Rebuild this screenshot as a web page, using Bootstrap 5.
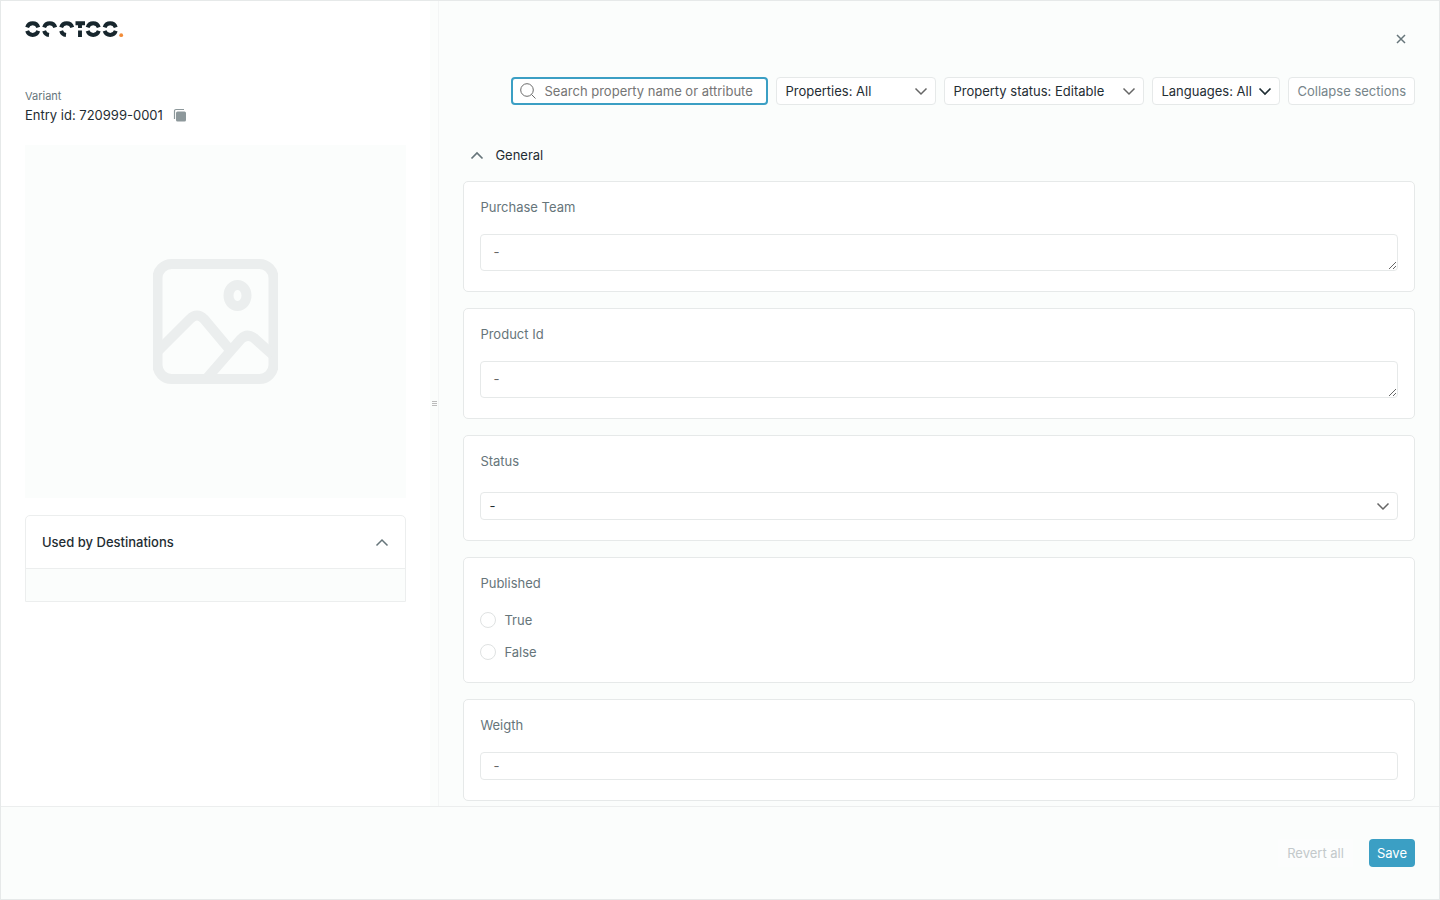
<!DOCTYPE html>
<html lang="en">
<head>
<meta charset="utf-8">
<meta name="viewport" content="width=device-width, initial-scale=1">
<title>Entry 720999-0001</title>
<link href="https://cdn.jsdelivr.net/npm/bootstrap@5.3.0/dist/css/bootstrap.min.css" rel="stylesheet">
<style>
:root{--ink:#1f2d33;--muted-ink:#66757a;--line:#e6e9e9;--surface:#fbfdfc;--accent:#3b9fc4}
body{font-family:Inter,"Liberation Sans",sans-serif;font-size:13px;line-height:18px;color:var(--ink);background:var(--surface)}
.shell{border:1px solid var(--line)}
.side{width:calc(30% - 2px);min-width:280px;background:#fff;padding:20px 24px 24px}
.brand{line-height:0}
.kind{font-size:11px;line-height:16px;color:var(--muted-ink);margin-top:50px}
.entry{height:22px;gap:10px}
.copy svg{display:block}
.placeholder-box{background:var(--surface);margin-top:19px;height:353px}
.dest{margin-top:17px;border:1px solid #eceeee;border-radius:5px 5px 0 0}
.dest-head{padding:16px;height:52px;font-weight:500}
.dest-head svg{display:block}
.dest-body{height:33px;background:var(--surface);border-top:1px solid #eceeee}
.grip{width:9px;border-right:1px solid #f3f5f5}
.pane{padding:27px 24px 6px}
.close-btn{width:28px;height:22px}
.tools{margin-top:27px}
.ctl{height:28px;border:1px solid var(--line);border-radius:4px;background-color:#fff;font-size:13px;line-height:18px;color:var(--ink);padding:4px 8px}
.form-select.ctl{background-size:14px 9px;background-position:right 7px center;padding-right:24px;
 background-image:url("data:image/svg+xml,%3Csvg xmlns='http://www.w3.org/2000/svg' viewBox='0 0 14 9' fill='none' stroke='%23666' stroke-width='1.5'%3E%3Cpath d='M1.5 1.5 7 7l5.500-5.500'/%3E%3C/svg%3E")}
.form-select.dark-arrow{background-image:url("data:image/svg+xml,%3Csvg xmlns='http://www.w3.org/2000/svg' viewBox='0 0 14 9' fill='none' stroke='%231f2d33' stroke-width='1.700'%3E%3Cpath d='M1.500 1.500 7 7l5.500-5.500'/%3E%3C/svg%3E")}
.w-props{width:160px}.w-status{width:200px}.w-lang{width:128px}
.finder{width:257px;border:2px solid var(--accent);border-radius:4px;background:#fff;height:28px;padding-left:7px}
.finder input{font-size:13px;line-height:18px;padding:0 8px;color:var(--ink)}
.finder input:focus{outline:0}
.finder input::placeholder{color:#757575}
.ctl.quiet{color:#77858a;font-size:13px}
.section-head{margin:41px 0 17px 7px;gap:11px;height:18px}
.prop{border:1px solid var(--line);border-radius:5px;background:#fff;padding:16px 16px 20px}
.prop-name{display:block;font-size:13px;line-height:18px;color:var(--muted-ink);margin:0 0 18px;font-weight:400}
.ctl.field{padding-left:12px;color:var(--muted-ink)}
.ctl.field::placeholder{color:#666}
textarea.ctl.field{height:37px;min-height:37px;padding-top:8px}
.wide-gap{margin-bottom:22px}
.picks{clear:both;gap:12px}
.pick{height:20px;gap:8px;color:var(--muted-ink)}
.pick input{width:16px;height:16px;margin:0;border-color:#dfe2e2}
.foot{border-top:1px solid #eceeee;height:93px;padding:0 24px;gap:16px}
.save{height:28px;border-radius:4px;background:var(--accent);color:#fff;font-size:13px;line-height:18px;padding:5px 8px;border:0}
.revert{height:28px;border:0;background:#fcfdfd;color:#c3c9cb;font-size:13px;line-height:18px;padding:5px 9px}
</style>
</head>
<body>
<div class="shell vh-100 d-flex flex-column">
 <div class="d-flex flex-grow-1 overflow-hidden">
  <aside class="side flex-shrink-0 overflow-auto">
   <div class="brand">
    <svg width="99" height="17" viewBox="0 0 99 17" role="img" aria-label="Logo">
     <defs>
      <path id="up" d="M2.100 6.300A5.900 5.900 0 0 1 13.300 6.300"/>
      <path id="dn" d="M2.100 9.900A5.900 5.900 0 0 0 13.300 9.900"/>
      <path id="ql" d="M2.100 9.900A5.900 5.900 0 0 0 7 14"/>
     </defs>
     <g fill="none" stroke="#17262d" stroke-width="3.900">
      <use href="#up"/><use href="#dn"/>
      <use href="#up" x="17"/><use href="#ql" x="17"/>
      <use href="#up" x="34"/><use href="#ql" x="34"/>
      <path d="M50.500 2.300h9.500M55 3v4M55 9.500v6.500"/>
      <use href="#up" x="60.500"/><use href="#dn" x="60.500"/>
      <use href="#up" x="77.500"/><use href="#dn" x="77.500"/>
     </g>
     <circle cx="96.200" cy="14.200" r="1.900" fill="#f28c38"/>
    </svg>
   </div>
   <div class="kind">Variant</div>
   <div class="entry d-flex align-items-center">
    <span>Entry id: 720999-0001</span>
    <button type="button" class="copy btn p-0 border-0" aria-label="Copy entry id">
     <svg width="14" height="14" viewBox="0 0 14 14"><path d="M1.500 11V3a1.500 1.500 0 0 1 1.500-1.500h8" fill="none" stroke="#8d989b" stroke-width="1.200"/><rect x="3" y="3.500" width="10" height="10" rx="1.500" fill="#8d989b"/></svg>
    </button>
   </div>
   <div class="placeholder-box d-flex align-items-center justify-content-center">
    <svg width="125" height="125" viewBox="0 0 125 125" fill="none" stroke="#ebeeee" stroke-width="10">
     <rect x="4.500" y="5" width="116" height="115" rx="14"/>
     <ellipse cx="84.500" cy="36.500" rx="9" ry="10.500"/>
     <path d="M5 92 37 60Q44 53 51 60L77 91M54 119 88 80Q94 74 101 79L120 96"/>
    </svg>
   </div>
   <section class="dest">
    <div class="dest-head d-flex align-items-center justify-content-between">
     <span>Used by Destinations</span>
     <button type="button" class="btn p-0 border-0" aria-label="Toggle destinations"><svg width="14" height="9" viewBox="0 0 14 9" fill="none" stroke="#66757a" stroke-width="1.500"><path d="M1.500 7.500 7 2l5.500 5.500"/></svg></button>
    </div>
    <div class="dest-body"></div>
   </section>
  </aside>
  <div class="grip d-flex align-items-center justify-content-center flex-shrink-0">
   <svg width="5" height="6" viewBox="0 0 5 6" stroke="#bbb"><path d="M0 .5h5M0 2.500h5M0 4.500h5"/></svg>
  </div>
  <main class="pane flex-grow-1 overflow-auto">
   <div class="d-flex justify-content-end">
    <button type="button" class="close-btn btn p-0 border-0 d-flex align-items-center justify-content-center" aria-label="Close"><svg width="10" height="10" viewBox="0 0 10 10" stroke="#66757a" stroke-width="1.500"><path d="m1 1 8 8M9 1 1 9"/></svg></button>
   </div>
   <div class="tools d-flex flex-wrap justify-content-end gap-2">
    <label class="finder d-flex align-items-center">
     <svg class="flex-shrink-0" width="16" height="16" viewBox="0 0 16 16" fill="none" stroke="#6b6b6b"><circle cx="7" cy="7" r="6.300"/><path d="m11.500 11.500 4 4"/></svg>
     <input type="text" class="border-0 bg-transparent w-100" placeholder="Search property name or attribute" aria-label="Search properties">
    </label>
    <select class="form-select ctl w-props" aria-label="Properties"><option>Properties: All</option></select>
    <select class="form-select ctl w-status" aria-label="Property status"><option>Property status: Editable</option></select>
    <select class="form-select ctl dark-arrow w-lang" aria-label="Languages"><option>Languages: All</option></select>
    <button type="button" class="ctl quiet">Collapse sections</button>
   </div>
   <div class="section-head d-flex align-items-center">
    <svg width="14" height="9" viewBox="0 0 14 9" fill="none" stroke="#66757a" stroke-width="1.700"><path d="M1.500 7.500 7 2l5.500 5.500"/></svg>
    <span>General</span>
   </div>
   <form class="d-flex flex-column gap-3">
    <div class="prop"><label class="prop-name" for="team">Purchase Team</label><textarea id="team" class="form-control ctl field" rows="1" placeholder="-"></textarea></div>
    <div class="prop"><label class="prop-name" for="pid">Product Id</label><textarea id="pid" class="form-control ctl field" rows="1" placeholder="-"></textarea></div>
    <div class="prop"><label class="prop-name wide-gap" for="state">Status</label><select id="state" class="form-select ctl"><option>-</option></select></div>
    <fieldset class="prop"><legend class="prop-name float-start w-100">Published</legend>
     <div class="picks d-flex flex-column align-items-start">
      <label class="pick d-flex align-items-center"><input class="form-check-input" type="radio" name="pub"><span>True</span></label>
      <label class="pick d-flex align-items-center"><input class="form-check-input" type="radio" name="pub"><span>False</span></label>
     </div>
    </fieldset>
    <div class="prop"><label class="prop-name" for="weight">Weigth</label><input id="weight" type="text" class="form-control ctl field" placeholder="-"></div>
   </form>
  </main>
 </div>
 <footer class="foot d-flex align-items-center justify-content-end flex-shrink-0">
  <button type="button" class="revert" disabled>Revert all</button>
  <button type="button" class="save">Save</button>
 </footer>
</div>
<script src="https://cdn.jsdelivr.net/npm/bootstrap@5.3.0/dist/js/bootstrap.bundle.min.js"></script>
</body>
</html>
